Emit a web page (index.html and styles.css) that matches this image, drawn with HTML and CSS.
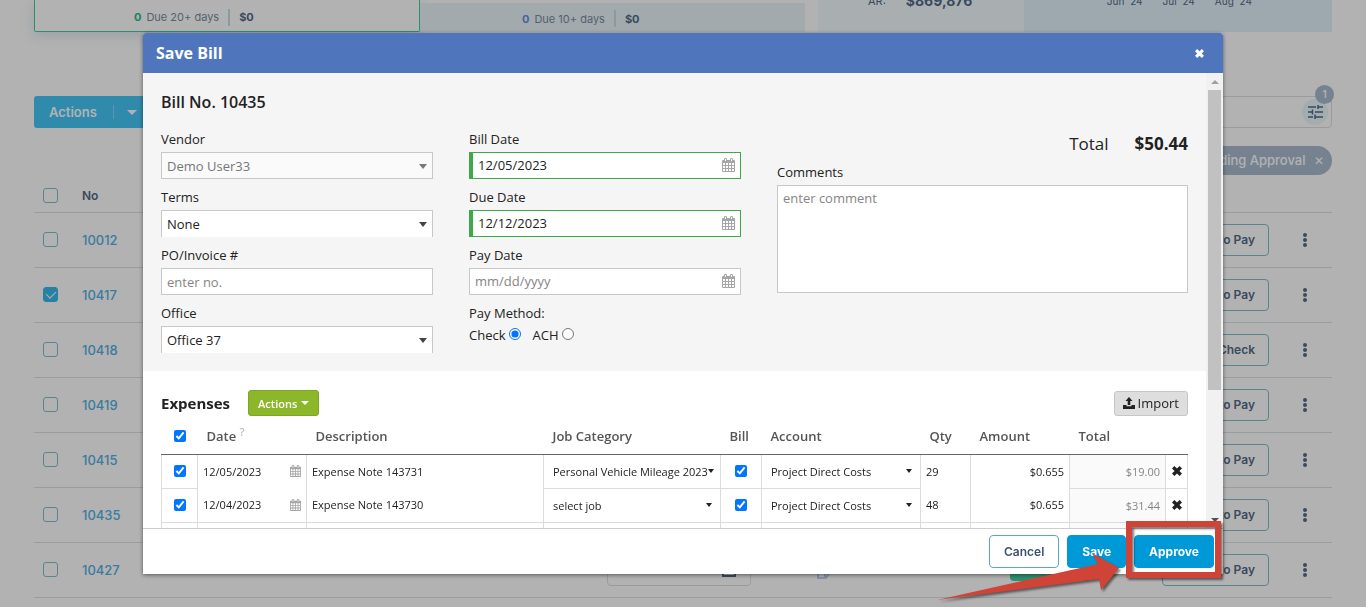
FILE: index.html
```html
<!DOCTYPE html>
<html lang="en">
<head>
<meta charset="utf-8">
<title>Save Bill</title>
<link rel="stylesheet" href="styles.css">
</head>
<body>
<svg class="defs" aria-hidden="true">
  <symbol id="calendar" viewBox="0 0 13 14">
    <path fill="currentColor" fill-rule="evenodd" d="M1 2h1V1q0-1 1.500-1T5 1v1h3V1q0-1 1.500-1T11 1v1h1q1 0 1 1v10q0 1-1 1H1q-1 0-1-1V3q0-1 1-1zM1 5v2h2V5zM4 5v2h2V5zM7 5v2h2V5zM10 5v2h2V5zM1 8v2h2V8zM4 8v2h2V8zM7 8v2h2V8zM10 8v2h2V8zM1 11v2h2v-2zM4 11v2h2v-2zM7 11v2h2v-2zM10 11v2h2v-2zM3 1v2h1V1zM9 1v2h1V1z"/>
  </symbol>
  <symbol id="cross" viewBox="0 0 10 10">
    <path fill="currentColor" d="M2.400 0 5 2.600 7.600 0 10 2.400 7.400 5 10 7.600 7.600 10 5 7.400 2.400 10 0 7.600 2.600 5 0 2.400z"/>
  </symbol>
  <symbol id="kebab" viewBox="0 0 4 14">
    <g fill="currentColor"><circle cx="2" cy="2" r="2"/><circle cx="2" cy="7" r="2"/><circle cx="2" cy="12" r="2"/></g>
  </symbol>
</svg>

<main class="page">
  <section class="summary">
    <div class="due due-active"><b class="count green">0</b><span>Due 20+ days</span><i class="bar"></i><b>$0</b></div>
    <div class="due due-next"><b class="count blue">0</b><span>Due 10+ days</span><i class="bar"></i><b>$0</b></div>
    <div class="receivable"><span>AR:</span><strong>$869,876</strong></div>
    <div class="months"><span>Jun '24</span><span>Jul '24</span><span>Aug '24</span></div>
  </section>

  <div class="toolbar">
    <button class="bulk" type="button"><span>Actions</span><i class="bulk-caret"></i></button>
    <div class="search">
      <button class="filter" type="button" aria-label="Filters">
        <svg width="15" height="14" viewBox="0 0 15 14"><path fill="none" stroke="currentColor" stroke-width="1.500" d="M0 2h8M10 2h5M10 0v4M0 7h4M7 7h8M4.500 4.500v5M0 12h5M7 12h8M7 9.500V14"/></svg>
        <span class="filter-count">1</span>
      </button>
    </div>
  </div>
  <div class="chips"><span class="chip">Pending Approval <span class="chip-x">✕</span></span></div>

  <table class="bills">
    <colgroup><col class="b-check"><col><col class="b-date"><col class="b-doc"><col class="b-status"><col class="b-action"><col class="b-more"></colgroup>
    <thead><tr><th><input class="tick" type="checkbox" aria-label="Select all"></th><th>No</th><th></th><th></th><th></th><th></th><th></th></tr></thead>
    <tbody>
      <tr><td><input class="tick" type="checkbox" aria-label="Select 10012"></td><td><a href="#">10012</a></td><td></td><td></td><td></td><td><button class="outline" type="button">Mark to Pay</button></td><td class="more"><svg width="4" height="14"><use href="#kebab"/></svg></td></tr>
      <tr><td><input class="tick" type="checkbox" aria-label="Select 10417" checked></td><td><a href="#">10417</a></td><td></td><td></td><td></td><td><button class="outline" type="button">Mark to Pay</button></td><td class="more"><svg width="4" height="14"><use href="#kebab"/></svg></td></tr>
      <tr><td><input class="tick" type="checkbox" aria-label="Select 10418"></td><td><a href="#">10418</a></td><td></td><td></td><td></td><td><button class="outline" type="button">Print Check</button></td><td class="more"><svg width="4" height="14"><use href="#kebab"/></svg></td></tr>
      <tr><td><input class="tick" type="checkbox" aria-label="Select 10419"></td><td><a href="#">10419</a></td><td></td><td></td><td></td><td><button class="outline" type="button">Mark to Pay</button></td><td class="more"><svg width="4" height="14"><use href="#kebab"/></svg></td></tr>
      <tr><td><input class="tick" type="checkbox" aria-label="Select 10415"></td><td><a href="#">10415</a></td><td></td><td></td><td></td><td><button class="outline" type="button">Mark to Pay</button></td><td class="more"><svg width="4" height="14"><use href="#kebab"/></svg></td></tr>
      <tr><td><input class="tick" type="checkbox" aria-label="Select 10435"></td><td><a href="#">10435</a></td><td></td><td></td><td></td><td><button class="outline" type="button">Mark to Pay</button></td><td class="more"><svg width="4" height="14"><use href="#kebab"/></svg></td></tr>
      <tr><td><input class="tick" type="checkbox" aria-label="Select 10427"></td><td><a href="#">10427</a></td>
        <td><span class="row-date"><svg width="14" height="14" viewBox="0 0 14 14"><path fill="none" stroke="currentColor" stroke-width="2" d="M1 2h12v11H1zM1 5h12"/></svg></span></td>
        <td><svg class="doc" width="16" height="18" viewBox="0 0 16 18"><path fill="none" stroke="currentColor" stroke-width="2" d="M2 1h12v10l-4 6H2zM9 16v-5h5"/></svg></td>
        <td><span class="status"></span></td><td><button class="outline" type="button">Mark to Pay</button></td><td class="more"><svg width="4" height="14"><use href="#kebab"/></svg></td></tr>
    </tbody>
  </table>
</main>

<div class="backdrop">
  <form class="modal" role="dialog" aria-labelledby="modal-title">
    <header class="modal-head">
      <h1 id="modal-title">Save Bill</h1>
      <button class="close" type="button" aria-label="Close"><svg width="9" height="9"><use href="#cross"/></svg></button>
    </header>

    <div class="modal-body">
      <div class="content">
        <section class="details">
          <h2>Bill No. 10435</h2>
          <div class="columns">
            <div class="stack">
              <div class="field"><label for="vendor">Vendor</label><div class="select closed muted"><select id="vendor" disabled><option>Demo User33</option></select></div></div>
              <div class="field"><label for="terms">Terms</label><div class="select"><select id="terms"><option>None</option></select></div></div>
              <div class="field"><label for="po">PO/Invoice #</label><input class="text" id="po" type="text" placeholder="enter no."></div>
              <div class="field"><label for="office">Office</label><div class="select"><select id="office"><option>Office 37</option></select></div></div>
            </div>
            <div class="stack">
              <div class="field"><label for="bill-date">Bill Date</label><div class="date valid"><input id="bill-date" type="text" value="12/05/2023"><svg width="13" height="14"><use href="#calendar"/></svg></div></div>
              <div class="field"><label for="due-date">Due Date</label><div class="date valid"><input id="due-date" type="text" value="12/12/2023"><svg width="13" height="14"><use href="#calendar"/></svg></div></div>
              <div class="field"><label for="pay-date">Pay Date</label><div class="date"><input id="pay-date" type="text" placeholder="mm/dd/yyyy"><svg width="13" height="14"><use href="#calendar"/></svg></div></div>
              <div class="method"><span>Pay Method:</span>
                <div class="radios"><label>Check<input type="radio" name="method" checked></label><label>ACH<input type="radio" name="method"></label></div>
              </div>
            </div>
            <div class="notes">
              <div class="total"><span>Total</span><strong>$50.44</strong></div>
              <label for="comments">Comments</label>
              <textarea id="comments" placeholder="enter comment"></textarea>
            </div>
          </div>
        </section>

        <section class="expenses">
          <div class="expenses-head">
            <h2>Expenses</h2>
            <button class="green-btn" type="button">Actions <i class="caret"></i></button>
            <button class="import" type="button"><svg width="12" height="12" viewBox="0 0 12 12"><path fill="currentColor" d="M6 0l3.500 4H7.300v4H4.700V4H2.500zM0 8h3.500v1.300h5V8H12v4H0z"/></svg>Import</button>
          </div>
          <table class="lines">
            <colgroup><col class="l-check"><col class="l-date"><col><col class="l-job"><col class="l-bill"><col class="l-account"><col class="l-qty"><col class="l-amount"><col class="l-total"><col class="l-del"></colgroup>
            <thead><tr>
              <th class="mid"><input type="checkbox" checked aria-label="All"></th><th>Date <sup>?</sup></th><th>Description</th><th>Job Category</th><th>Bill</th><th>Account</th><th>Qty</th><th>Amount</th><th>Total</th><th></th>
            </tr></thead>
            <tbody>
              <tr>
                <td class="mid"><input type="checkbox" checked aria-label="Include"></td>
                <td class="open"><div class="cell"><span>12/05/2023</span><svg width="11" height="12" viewBox="0 0 13 14"><use href="#calendar"/></svg></div></td>
                <td class="open">Expense Note 143731</td>
                <td class="pick"><div class="cell"><span>Personal Vehicle Mileage 2023</span><i class="caret"></i></div></td>
                <td class="mid"><input type="checkbox" checked aria-label="Bill"></td>
                <td class="pick"><div class="cell"><span>Project Direct Costs</span><i class="caret"></i></div></td>
                <td class="open">29</td><td class="open num">$0.655</td><td class="num sum">$19.00</td>
                <td class="mid"><button class="remove" type="button" aria-label="Remove"><svg width="10" height="10"><use href="#cross"/></svg></button></td>
              </tr>
              <tr>
                <td class="mid"><input type="checkbox" checked aria-label="Include"></td>
                <td><div class="cell"><span>12/04/2023</span><svg width="11" height="12" viewBox="0 0 13 14"><use href="#calendar"/></svg></div></td>
                <td>Expense Note 143730</td>
                <td class="pick"><div class="cell"><span>select job</span><i class="caret"></i></div></td>
                <td class="mid"><input type="checkbox" checked aria-label="Bill"></td>
                <td class="pick"><div class="cell"><span>Project Direct Costs</span><i class="caret"></i></div></td>
                <td>48</td><td class="num">$0.655</td><td class="num sum">$31.44</td>
                <td class="mid"><button class="remove" type="button" aria-label="Remove"><svg width="10" height="10"><use href="#cross"/></svg></button></td>
              </tr>
              <tr><td></td><td></td><td></td><td></td><td></td><td></td><td></td><td></td><td class="sum"></td><td></td></tr>
            </tbody>
          </table>
        </section>
      </div>
      <div class="scrollbar" aria-hidden="true"><i class="up"></i><i class="thumb"></i><i class="down"></i></div>
    </div>

    <footer class="modal-foot">
      <button class="btn cancel" type="button">Cancel</button>
      <button class="btn" type="button">Save</button>
      <button class="btn" type="button">Approve</button>
    </footer>

    <svg class="callout" width="300" height="92" viewBox="0 0 300 92" aria-hidden="true">
      <rect x="203" y="9" width="89" height="51" fill="none" stroke="#cf4436" stroke-width="6"/>
      <path fill="#cf4436" d="M11 85 172 49 166 38 193 53 175 75 173 64z"/>
    </svg>
  </form>
</div>
</body>
</html>
```

FILE: styles.css
```css
* { box-sizing: border-box; }
body { margin: 0; overflow: hidden; background: #fff; font-family: "Open Sans", sans-serif; font-size: 13px; color: #222; }
button, input, select, textarea { font: inherit; color: inherit; margin: 0; }
button { cursor: pointer; }
.defs { display: none; }

/* Bills list */
.page { height: 100vh; overflow: hidden; padding: 0 34px; font-family: Inter, sans-serif; color: #536b88; }
.summary { display: grid; grid-template-columns: 386fr 398fr 206fr 308fr; height: 32px; font-size: 11px; }
.due { display: flex; align-items: center; gap: 5px; }
.due-active { border: 1px solid #3fcfa0; border-top: 0; border-radius: 0 0 2px 2px; padding: 3px 0 0 99px; box-shadow: 0 4px 14px #dfe6ee; }
.due-next { background: #e9f4f8; margin: 3px 13px 0 0; padding: 2px 0 0 102px; }
.due span { color: #7b8ba0; }
.count.green { color: #2eb98a; }
.count.blue { color: #6a8ee0; }
.bar { width: 2px; height: 17px; margin: 0 4px; background: #c5dde8; }
.receivable, .months { display: flex; overflow: hidden; align-items: flex-end; }
.receivable { background: #f3fbfe; padding: 0 50px 21px; gap: 20px; line-height: 20px; }
.receivable strong { font-size: 14px; }
.months { background: #e3f1fb; padding: 0 80px 23px 0; gap: 20px; font-size: 10px; line-height: 16px; justify-content: flex-end; white-space: nowrap; }

.toolbar { display: flex; height: 32px; margin-top: 64px; }
.bulk { display: flex; align-items: center; width: 120px; padding: 0 13px 0 15px; border: 0; border-radius: 3px 0 0 3px; background: #45c6f5; color: #fff; font-size: 13px; font-weight: 600; }
.bulk span { flex: 1; text-align: left; }
.bulk-caret { display: flex; align-items: center; justify-content: flex-end; width: 28px; height: 14px; border-left: 1px solid #7fdafa; }
.bulk-caret::after { content: ""; border: 5px solid transparent; border-top-color: #fff; border-bottom: 0; margin-right: 4px; }
.search { flex: 1; display: flex; align-items: center; justify-content: flex-end; padding-right: 3px; border: 1px solid #dcdfe4; border-radius: 0 4px 4px 0; }
.filter { position: relative; display: grid; place-items: center; width: 26px; height: 26px; padding: 0; border: 0; border-radius: 50%; background: #eaf6fb; color: #536b88; }
.filter-count { position: absolute; top: -14px; right: -6px; width: 19px; border-radius: 50%; background: #a9bacf; color: #fff; font-size: 10px; font-weight: 600; line-height: 19px; text-align: center; }
.chips { display: flex; justify-content: flex-end; margin-top: 18px; }
.chip { padding: 0 8px 0 16px; border-radius: 15px; background: #a9bacf; color: #fff; font-weight: 500; line-height: 29px; white-space: nowrap; }
.chip-x { margin-left: 5px; font-size: 12px; }

.bills { width: 100%; table-layout: fixed; border-collapse: collapse; }
.bills th, .bills td { height: 55px; padding: 0; border-bottom: 1px solid #d7e2ea; text-align: left; vertical-align: middle; }
.bills th { height: 37px; padding-top: 4px; font-size: 12px; font-weight: 600; }
.bills a { color: #55b2e2; font-size: 13px; font-weight: 500; text-decoration: none; }
.b-check { width: 48px; }
.b-date { width: 209px; }
.b-doc { width: 194px; }
.b-status { width: 152px; }
.b-action { width: 107px; }
.b-more { width: 63px; }
.tick { display: block; appearance: none; width: 15px; height: 15px; margin-left: 9px; border: 1px solid #86bccd; border-radius: 3px; }
.tick:checked { border-color: #39b9e8; background: #39b9e8; }
.tick:checked::after { content: ""; display: block; width: 5px; height: 8px; margin: 1px 0 0 4px; border: solid #fff; border-width: 0 1px 1px 0; transform: rotate(45deg); }
.outline { width: 100%; height: 32px; padding: 0 13px; border: 1px solid #86bccd; border-radius: 4px; background: none; color: #536b88; font-size: 12px; font-weight: 600; text-align: right; white-space: nowrap; }
.more svg { display: block; margin: 0 auto; color: #536b88; }
.bills .more { padding-left: 9px; }
.row-date { display: flex; align-items: center; justify-content: flex-end; width: 144px; height: 32px; padding-right: 14px; border: 1px solid #dcdfe4; border-radius: 4px; }
.doc { display: block; color: #b9d3ec; }
.status { display: block; width: 80px; height: 22px; border-radius: 4px; background: #3fcfa0; }

/* Dialog */
.backdrop { position: fixed; inset: 0; display: flex; align-items: center; justify-content: center; padding: 33px; background: rgba(0, 0, 0, .3); }
.modal { position: relative; display: flex; flex-direction: column; width: 100%; max-width: 1080px; height: 100%; border-radius: 3px 3px 0 0; background: #fff; box-shadow: 0 1px 4px rgba(0, 0, 0, .5); }
.modal-head { display: flex; align-items: center; justify-content: space-between; height: 40px; padding: 0 19px 0 13px; border-radius: 3px 3px 0 0; background: #4f76bd; color: #fff; }
.modal-head h1 { margin: 0; font-size: 16px; font-weight: 700; }
.close, .remove { display: inline-flex; padding: 0; border: 0; background: none; }
.modal-body { flex: 1; display: flex; min-height: 0; overflow: hidden; }
.content { flex: 1; min-width: 0; }
h2 { margin: 0; font-size: 16px; font-weight: 700; line-height: 22px; }
.details { padding: 18px; background: #f5f5f5; }
.details h2 { font-weight: 600; }
.columns { display: grid; grid-template-columns: 272px 272px 1fr; gap: 36px; margin-top: 16px; }
.stack { display: flex; flex-direction: column; gap: 8px; }
.field, .notes { display: flex; flex-direction: column; gap: 3px; line-height: 20px; }
.text, .date, .select { height: 27px; border: 1px solid #c8c8c8; background: #fff; }
.text { padding: 0 5px; }
.select { position: relative; border-bottom: 0; }
.select select { width: 100%; height: 100%; padding: 0 5px; border: 0; background: none; appearance: none; opacity: 1; }
.select::after { content: ""; position: absolute; right: 5px; top: 11px; border: 4px solid transparent; border-top: 5px solid #444; border-bottom: 0; pointer-events: none; }
.select.closed { border-bottom: 1px solid #c8c8c8; }
.muted { background: #fafafa; color: #777; }
.select.muted::after { border-top-color: #777; }
.date { display: flex; align-items: center; padding: 0 5px; color: #222; }
.date input { flex: 1; min-width: 0; padding: 0 0 2px; border: 0; background: none; outline: 0; }
.date svg { margin-bottom: 1px; color: #a6a6a6; }
.date.valid { border-color: #3fa84a; border-left-width: 4px; }
::placeholder { color: #858585; opacity: 1; }
.method { line-height: 20px; }
.radios { display: flex; gap: 12px; margin-top: 2px; }
.radios label { display: flex; align-items: center; gap: 3px; }
.radios input { width: 12px; height: 12px; margin-bottom: 2px; }
.total { display: flex; justify-content: flex-end; gap: 26px; margin-bottom: 1px; font-size: 17px; line-height: 29px; }
.total strong { font-weight: 700; }
.notes textarea { height: 108px; padding: 2px 5px; border: 1px solid #c8c8c8; background: #fff; line-height: 20px; resize: none; }

.expenses { padding: 19px 18px 0; }
.expenses-head { display: flex; align-items: center; gap: 18px; height: 26px; }
.expenses-head h2 { font-size: 15px; }
.green-btn { display: flex; align-items: center; gap: 4px; height: 26px; padding: 0 9px; border: 1px solid #7ea524; border-radius: 3px; background: #8cb72b; color: #fff; font-size: 11px; font-weight: 600; }
.import { display: flex; align-items: center; gap: 3px; height: 25px; margin-left: auto; padding: 0 8px; border: 1px solid #c6c6c6; border-radius: 3px; background: #dedede; }
.caret { flex: none; border: 4px solid transparent; border-top-color: currentColor; border-bottom: 0; }
.lines { width: 100%; table-layout: fixed; border-collapse: collapse; font-size: 11px; }
.lines th { height: 38px; padding: 2px 9px 0; border-bottom: 1px solid #666; color: #555; font-size: 13px; font-weight: 600; text-align: left; white-space: nowrap; }
.lines td { height: 34px; padding: 0 5px; border: 1px solid #dcdcdc; white-space: nowrap; }
.lines tbody tr:first-child td { border-top-color: #666; }
.lines tbody tr:first-child td.open { border-bottom: 0; }
.lines tr:nth-child(2) td:nth-child(2), .lines tr:nth-child(2) td:nth-child(3), .lines tr:nth-child(2) td:nth-child(7), .lines tr:nth-child(2) td:nth-child(8) { border-top: 0; }
.lines th.mid { padding: 2px 0 0; }
.lines td.mid { padding: 0; text-align: center; }
.lines input { display: block; width: 12px; height: 12px; margin: 0 auto; }
.lines sup { color: #bbb; font-size: 11px; line-height: 0; }
.lines td.pick { padding: 0 9px; }
.pick .caret { margin-right: -1px; border-width: 4px 3px 0; }
.cell { display: flex; align-items: center; justify-content: space-between; }
.cell svg { color: #a6a6a6; }
.lines td.num { text-align: right; }
.lines td.sum { background: #fafafa; color: #858585; }
.l-check { width: 36px; }
.l-date { width: 109px; }
.l-job { width: 177px; }
.l-bill { width: 41px; }
.l-account { width: 159px; }
.l-qty { width: 50px; }
.l-amount { width: 99px; }
.l-total { width: 96px; }
.l-del { width: 22px; }

.scrollbar { display: flex; flex-direction: column; align-items: center; width: 17px; padding: 7px 0 6px; background: #f1f1f1; }
.up { border: 4px solid transparent; border-top: 0; border-bottom-color: #a0a0a0; }
.thumb { width: 13px; height: 300px; margin-top: 6px; background: #c1c1c1; }
.down { margin-top: auto; border: 4px solid transparent; border-bottom: 0; border-top-color: #505050; }

.modal-foot { display: flex; align-items: center; justify-content: flex-end; gap: 8px; height: 46px; padding-right: 9px; border-top: 1px solid #ccc; }
.btn { height: 33px; padding: 0 14px; border: 1px solid #0099d8; border-radius: 4px; background: #0099d8; color: #fff; font-family: Inter, sans-serif; font-size: 12px; font-weight: 700; }
.btn.cancel { border-color: #5ba7c4; background: #fff; color: #3c536f; font-weight: 600; }
.callout { position: absolute; right: -3px; bottom: -33px; pointer-events: none; filter: drop-shadow(2px 2px 1px rgba(0, 0, 0, .5)); }
```
